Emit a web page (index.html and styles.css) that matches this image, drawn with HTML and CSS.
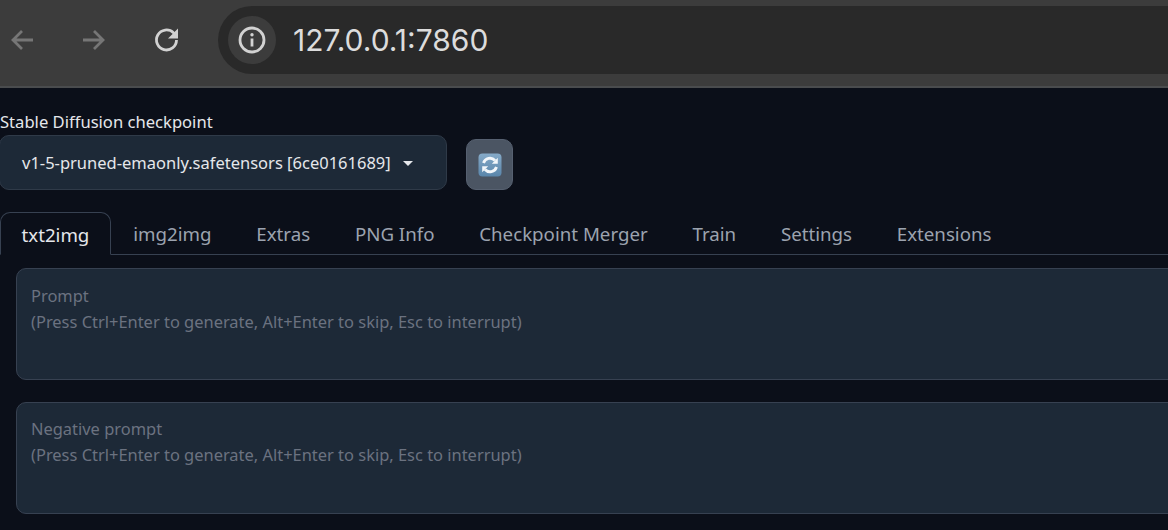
FILE: index.html
```html
<!DOCTYPE html>
<html lang="en">
<head>
  <meta charset="UTF-8">
  <title>Stable Diffusion</title>
  <link rel="stylesheet" href="styles.css">
</head>
<body>
  <header class="toolbar">
    <button class="nav-btn dim back" aria-label="Back">
      <svg width="28" height="28" viewBox="0 0 28 28"><path d="M25 14H5M14 5l-9 9 9 9" /></svg>
    </button>
    <button class="nav-btn dim forward" aria-label="Forward">
      <svg width="28" height="28" viewBox="0 0 28 28"><path d="M3 14h20M14 5l9 9-9 9" /></svg>
    </button>
    <button class="nav-btn reload" aria-label="Reload">
      <svg width="28" height="28" viewBox="0 0 28 28"><path d="M23.500 14a10 10 0 1 1-3-7.200L24 10" /><path class="fill" d="M25 2.500v10h-10z" /></svg>
    </button>
    <div class="address">
      <span class="site-info">
        <svg width="28" height="28" viewBox="0 0 28 28"><circle cx="14" cy="14" r="12" /><circle class="fill" cx="14" cy="8.800" r="1.700" /><path d="M14 12.500v8" /></svg>
      </span>
      <span class="url">127.0.0.1:7860</span>
    </div>
  </header>

  <main class="page">
    <label class="field-label">Stable Diffusion checkpoint</label>
    <div class="model-row">
      <div class="model-select">
        <span>v1-5-pruned-emaonly.safetensors [6ce0161689]</span>
        <span class="caret"></span>
      </div>
      <button class="refresh" aria-label="Refresh">
        <svg width="24" height="24" viewBox="0 0 24 24">
          <defs>
            <linearGradient id="emoji" x1="0" y1="0" x2="0" y2="1">
              <stop offset="0" stop-color="#86aac8" />
              <stop offset="1" stop-color="#5a86ab" />
            </linearGradient>
          </defs>
          <rect x="0.500" y="0.500" width="23" height="23" rx="4" fill="url(#emoji)" />
          <path d="M5.500 10a6.800 6.800 0 0 1 11.500-2.500M18.500 14a6.800 6.800 0 0 1-11.500 2.500" fill="none" stroke="#f2f6fa" stroke-width="2.800" />
          <path d="M19.800 4.800v6h-6zM4.200 19.200v-6h6z" fill="#f2f6fa" />
        </svg>
      </button>
    </div>

    <nav class="tabs">
      <a class="tab active">txt2img</a>
      <a class="tab">img2img</a>
      <a class="tab">Extras</a>
      <a class="tab">PNG Info</a>
      <a class="tab">Checkpoint Merger</a>
      <a class="tab">Train</a>
      <a class="tab">Settings</a>
      <a class="tab">Extensions</a>
    </nav>

    <section class="prompts">
      <div class="prompt-box">Prompt<br>(Press Ctrl+Enter to generate, Alt+Enter to skip, Esc to interrupt)</div>
      <div class="prompt-box">Negative prompt<br>(Press Ctrl+Enter to generate, Alt+Enter to skip, Esc to interrupt)</div>
    </section>
  </main>
</body>
</html>
```

FILE: styles.css
```css
* {
  box-sizing: border-box;
}
html, body {
  height: 100%;
}
body {
  margin: 0;
  overflow: hidden;
  background: #0b0f19;
  font-family: "Noto Sans", sans-serif;
}
.toolbar {
  display: flex;
  align-items: center;
  height: 88px;
  padding: 6px 0 12px 8px;
  background: #3c3c3c;
  border-bottom: 2px solid #4a4c4e;
}
.nav-btn {
  display: flex;
  width: 28px;
  height: 28px;
  padding: 0;
  border: none;
  background: none;
}
.nav-btn.back {
  margin-right: 44px;
}
.nav-btn.forward {
  margin-right: 45px;
}
.nav-btn.reload {
  margin-right: 37px;
}
.nav-btn svg, .site-info svg {
  fill: none;
  stroke: #d2d2d2;
  stroke-width: 2.800;
}
.nav-btn.dim svg {
  stroke: #767676;
}
svg .fill {
  fill: #d2d2d2;
  stroke: none;
}
.address {
  flex: 1;
  display: flex;
  align-items: center;
  height: 68px;
  padding-left: 10px;
  background: #292929;
  border-radius: 34px 0 0 34px;
}
.site-info {
  display: flex;
  align-items: center;
  justify-content: center;
  width: 48px;
  height: 48px;
  border-radius: 50%;
  background: #3c3c3c;
}
.url {
  margin-left: 17px;
  font-family: "Inter", sans-serif;
  font-size: 30px;
  color: #dcdcdc;
}
.page {
  padding-top: 23px;
}
.field-label {
  display: block;
  height: 24px;
  font-size: 16.600px;
  line-height: 22px;
  color: #e5e7eb;
}
.model-row {
  display: flex;
  align-items: flex-end;
  height: 55px;
}
.model-select {
  display: flex;
  align-items: center;
  width: 448px;
  height: 55px;
  margin-left: -1px;
  padding-left: 22px;
  background: #1d2937;
  border: 1px solid #2f3a48;
  border-radius: 10px;
  font-size: 16.500px;
  color: #e5e7eb;
}
.caret {
  width: 0;
  height: 0;
  margin: 2px 0 0 12px;
  border-left: 5.500px solid transparent;
  border-right: 5.500px solid transparent;
  border-top: 5.500px solid #e5e7eb;
}
.refresh {
  display: flex;
  align-items: center;
  justify-content: center;
  width: 47px;
  height: 51px;
  margin-left: 19px;
  padding: 0;
  background: #4b5563;
  border: 1px solid #566070;
  border-radius: 10px;
}
.tabs {
  display: flex;
  height: 43px;
  margin-top: 22px;
  border-bottom: 1px solid #374151;
}
.tab {
  height: 43px;
  padding: 0 22.400px;
  font-size: 18.700px;
  line-height: 44px;
  color: #9ca3af;
}
.tab.active {
  color: #e5e7eb;
  background: #0b0f19;
  border: 1px solid #374151;
  border-bottom-color: #0b0f19;
  border-radius: 10px 10px 0 0;
  padding: 0 20.500px;
}
.prompts {
  display: flex;
  flex-direction: column;
  gap: 22px;
  width: 1200px;
  margin: 13px 0 0 16px;
}
.prompt-box {
  height: 112px;
  padding: 14px 14px;
  background: #1d2937;
  border: 1px solid #374151;
  border-radius: 10px;
  font-size: 16.450px;
  line-height: 26px;
  color: #6b7280;
}
.prompt-box:last-child {
  padding-top: 13px;
}
```
